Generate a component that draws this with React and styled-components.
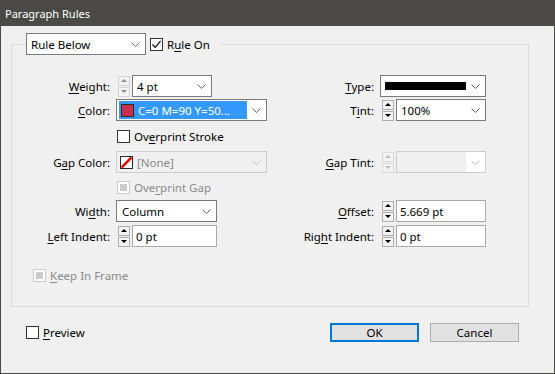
import styled, { createGlobalStyle } from "styled-components";

const GlobalStyle = createGlobalStyle`
  html, body {
    margin: 0;
    padding: 0;
    background: #f0f0f0;
  }
  body {
    font-family: "Noto Sans", "Liberation Sans", sans-serif;
    font-size: 11.5px;
    color: #000;
  }
`;

const Window = styled.div`
  width: 555px;
  height: 374px;
  box-sizing: border-box;
  border: 1px solid #4b4946;
  border-top: none;
  background: #f0f0f0;
  display: flex;
  flex-direction: column;
`;

const TitleBar = styled.div`
  height: 26px;
  margin: 0 -1px;
  background: #4b4946;
  color: #fff;
  display: flex;
  align-items: center;
  padding-left: 5px;
  font-size: 11px;
`;

const Body = styled.div`
  padding: 7px 0 0 10px;
  display: flex;
  flex-direction: column;
`;

const Group = styled.fieldset`
  margin: 0;
  padding: 0;
  width: 518px;
  height: 274px;
  box-sizing: border-box;
  border: 1px solid #dcdcdc;
  min-width: 0;
`;

const Legend = styled.legend`
  margin-left: 14px;
  padding: 0 10px 0 0;
`;

const LegendInner = styled.div`
  display: flex;
  align-items: center;
`;

const Row = styled.div`
  display: grid;
  grid-template-columns: 98px 159px 93px 106px;
  column-gap: 6px;
  height: 22px;
  align-items: center;
  margin-top: ${(p) => p.$mt || 0}px;
`;

const Label = styled.div`
  text-align: right;
  white-space: nowrap;
  color: ${(p) => (p.$disabled ? "#8a8a8a" : "#000")};
`;

const Key = styled.span`
  text-decoration: underline;
  text-underline-offset: 2px;
`;

const Cell = styled.div`
  display: flex;
  align-items: center;
`;

const Select = styled.div`
  width: ${(p) => p.$w}px;
  height: 22px;
  box-sizing: border-box;
  border: 1px solid ${(p) => (p.$disabled ? "#cccccc" : "#7a7a7a")};
  background: ${(p) => (p.$disabled ? "#f0f0f0" : "#fff")};
  display: flex;
  align-items: stretch;
`;

const Value = styled.div`
  flex: 1;
  min-width: 0;
  display: flex;
  align-items: center;
  gap: 4px;
  padding-left: ${(p) => (p.$pad ?? 4)}px;
  white-space: nowrap;
  color: ${(p) => (p.$disabled ? "#8a8a8a" : "#000")};
`;

const Highlight = styled.div`
  flex: 1;
  min-width: 0;
  margin: 1px 0 1px 2px;
  padding-left: 2px;
  background: #3399ff;
  color: #fff;
  display: flex;
  align-items: center;
  gap: 4px;
  white-space: nowrap;
  overflow: hidden;
`;

const Arrow = styled.div`
  width: 19px;
  display: flex;
  align-items: center;
  justify-content: center;
  background: ${(p) => p.$bg || "transparent"};
`;

const Swatch = styled.span`
  width: 13px;
  height: 13px;
  box-sizing: border-box;
  border: 1px solid #2a2a2a;
  background: ${(p) => p.$color || "#fff"};
  flex: none;
  display: inline-flex;
`;

const LineBar = styled.span`
  width: 81px;
  height: 8px;
  background: #000;
`;

const Input = styled.div`
  width: ${(p) => p.$w}px;
  height: 22px;
  box-sizing: border-box;
  border: 1px solid #a9a9a9;
  background: #fff;
  display: flex;
  align-items: center;
  padding-left: 3px;
`;

const Spin = styled.div`
  width: 12px;
  margin: 0 2px;
  display: flex;
  flex-direction: column;
  gap: 1px;
`;

const SpinHalf = styled.div`
  height: 10px;
  box-sizing: border-box;
  border: 1px solid ${(p) => p.$border};
  background: #f3f3f3;
  display: flex;
  align-items: center;
  justify-content: center;
`;

const Tri = styled.span`
  width: 0;
  height: 0;
  border-left: 3px solid transparent;
  border-right: 3px solid transparent;
  ${(p) => (p.$down ? "border-top" : "border-bottom")}: 3px solid ${(p) => p.$color};
`;

const CheckRow = styled.div`
  display: flex;
  align-items: center;
  gap: 4px;
  height: 22px;
  margin-top: ${(p) => p.$mt || 0}px;
  padding-left: ${(p) => p.$pl || 0}px;
  color: ${(p) => (p.$disabled ? "#8a8a8a" : "#000")};
  white-space: nowrap;
`;

const Box = styled.span`
  width: 13px;
  height: 13px;
  box-sizing: border-box;
  border: 1px solid ${(p) => (p.$disabled ? "#cccccc" : "#333")};
  background: #fff;
  display: inline-flex;
  align-items: center;
  justify-content: center;
  flex: none;
`;

const Dot = styled.span`
  width: 7px;
  height: 7px;
  background: #cccccc;
`;

const Footer = styled.div`
  width: 518px;
  margin-top: 14px;
  padding: 0 10px 0 15px;
  box-sizing: border-box;
  display: flex;
  align-items: center;
`;

const Buttons = styled.div`
  margin-left: auto;
  display: flex;
  gap: 11px;
`;

const Button = styled.div`
  width: 89px;
  height: 19px;
  box-sizing: border-box;
  border: ${(p) => (p.$primary ? "2px solid #0078d7" : "1px solid #adadad")};
  background: #e1e1e1;
  display: flex;
  align-items: center;
  justify-content: center;
`;

const Chevron = ({ color = "#5f5f5f" }) => (
  <svg width="9" height="5" viewBox="0 0 9 5">
    <path d="M0.5 0.5 L4.5 4.5 L8.5 0.5" fill="none" stroke={color} strokeWidth="1" />
  </svg>
);

const Check = () => (
  <svg width="11" height="11" viewBox="0 0 11 11">
    <path d="M1.5 5.5 L4.2 8.3 L9.6 1.8" fill="none" stroke="#000" strokeWidth="1.2" />
  </svg>
);

const NoneSwatch = () => (
  <Swatch>
    <svg width="11" height="11" viewBox="0 0 11 11">
      <path d="M0.5 10.5 L10.5 0.5" stroke="#f00000" strokeWidth="2.6" />
    </svg>
  </Swatch>
);

const spinColors = {
  normal: { border: "#acacac", tri: "#000" },
  dim: { border: "#d2d2d2", tri: "#8c8c8c" },
  disabled: { border: "#d9d9d9", tri: "#bdbdbd" },
};

const Spinner = ({ state = "normal" }) => {
  const c = spinColors[state];
  return (
    <Spin>
      <SpinHalf $border={c.border}>
        <Tri $color={c.tri} />
      </SpinHalf>
      <SpinHalf $border={c.border}>
        <Tri $down $color={c.tri} />
      </SpinHalf>
    </Spin>
  );
};

export default function App() {
  return (
    <>
      <GlobalStyle />
      <Window>
        <TitleBar>Paragraph Rules</TitleBar>
        <Body>
          <Group>
            <Legend>
              <LegendInner>
                <Select $w={120}>
                  <Value $pad={4}>Rule Below</Value>
                  <Arrow>
                    <Chevron />
                  </Arrow>
                </Select>
                <CheckRow $pl={4}>
                  <Box>
                    <Check />
                  </Box>
                  <span>
                    R<Key>u</Key>le On
                  </span>
                </CheckRow>
              </LegendInner>
            </Legend>

            <Row $mt={20}>
              <Label>
                <Key>W</Key>eight:
              </Label>
              <Cell>
                <Spinner state="dim" />
                <Select $w={80}>
                  <Value>4 pt</Value>
                  <Arrow>
                    <Chevron />
                  </Arrow>
                </Select>
              </Cell>
              <Label>
                <Key>T</Key>ype:
              </Label>
              <Cell>
                <Select $w={107}>
                  <Value>
                    <LineBar />
                  </Value>
                  <Arrow>
                    <Chevron />
                  </Arrow>
                </Select>
              </Cell>
            </Row>

            <Row $mt={2}>
              <Label>
                <Key>C</Key>olor:
              </Label>
              <Cell>
                <Select $w={151}>
                  <Highlight>
                    <Swatch $color="#c8304d" />
                    C=0 M=90 Y=50...
                  </Highlight>
                  <Arrow>
                    <Chevron />
                  </Arrow>
                </Select>
              </Cell>
              <Label>
                T<Key>i</Key>nt:
              </Label>
              <Cell>
                <Spinner />
                <Select $w={90}>
                  <Value>100%</Value>
                  <Arrow>
                    <Chevron />
                  </Arrow>
                </Select>
              </Cell>
            </Row>

            <CheckRow $mt={4} $pl={105}>
              <Box />
              <span>
                Ov<Key>e</Key>rprint Stroke
              </span>
            </CheckRow>

            <Row $mt={4}>
              <Label>
                G<Key>a</Key>p Color:
              </Label>
              <Cell>
                <Select $w={151} $disabled>
                  <Value $disabled $pad={3}>
                    <NoneSwatch />
                    [None]
                  </Value>
                  <Arrow>
                    <Chevron color="#c2c2c2" />
                  </Arrow>
                </Select>
              </Cell>
              <Label>
                <Key>G</Key>ap Tint:
              </Label>
              <Cell>
                <Spinner state="disabled" />
                <Select $w={90} $disabled>
                  <Value />
                  <Arrow $bg="#fff">
                    <Chevron color="#c2c2c2" />
                  </Arrow>
                </Select>
              </Cell>
            </Row>

            <CheckRow $mt={3} $pl={105} $disabled>
              <Box $disabled>
                <Dot />
              </Box>
              <span>
                Ove<Key>r</Key>print Gap
              </span>
            </CheckRow>

            <Row $mt={2}>
              <Label>
                Wi<Key>d</Key>th:
              </Label>
              <Cell>
                <Select $w={101}>
                  <Value $pad={5}>Column</Value>
                  <Arrow>
                    <Chevron />
                  </Arrow>
                </Select>
              </Cell>
              <Label>
                <Key>O</Key>ffset:
              </Label>
              <Cell>
                <Spinner />
                <Input $w={91}>5.669 pt</Input>
              </Cell>
            </Row>

            <Row $mt={3}>
              <Label>
                <Key>L</Key>eft Indent:
              </Label>
              <Cell>
                <Spinner />
                <Input $w={85}>0 pt</Input>
              </Cell>
              <Label>
                Rig<Key>h</Key>t Indent:
              </Label>
              <Cell>
                <Spinner />
                <Input $w={91}>0 pt</Input>
              </Cell>
            </Row>

            <CheckRow $mt={17} $pl={21} $disabled>
              <Box $disabled>
                <Dot />
              </Box>
              <span>
                <Key>K</Key>eep In Frame
              </span>
            </CheckRow>
          </Group>

          <Footer>
            <CheckRow>
              <Box />
              <span>
                <Key>P</Key>review
              </span>
            </CheckRow>
            <Buttons>
              <Button $primary>OK</Button>
              <Button>Cancel</Button>
            </Buttons>
          </Footer>
        </Body>
      </Window>
    </>
  );
}
